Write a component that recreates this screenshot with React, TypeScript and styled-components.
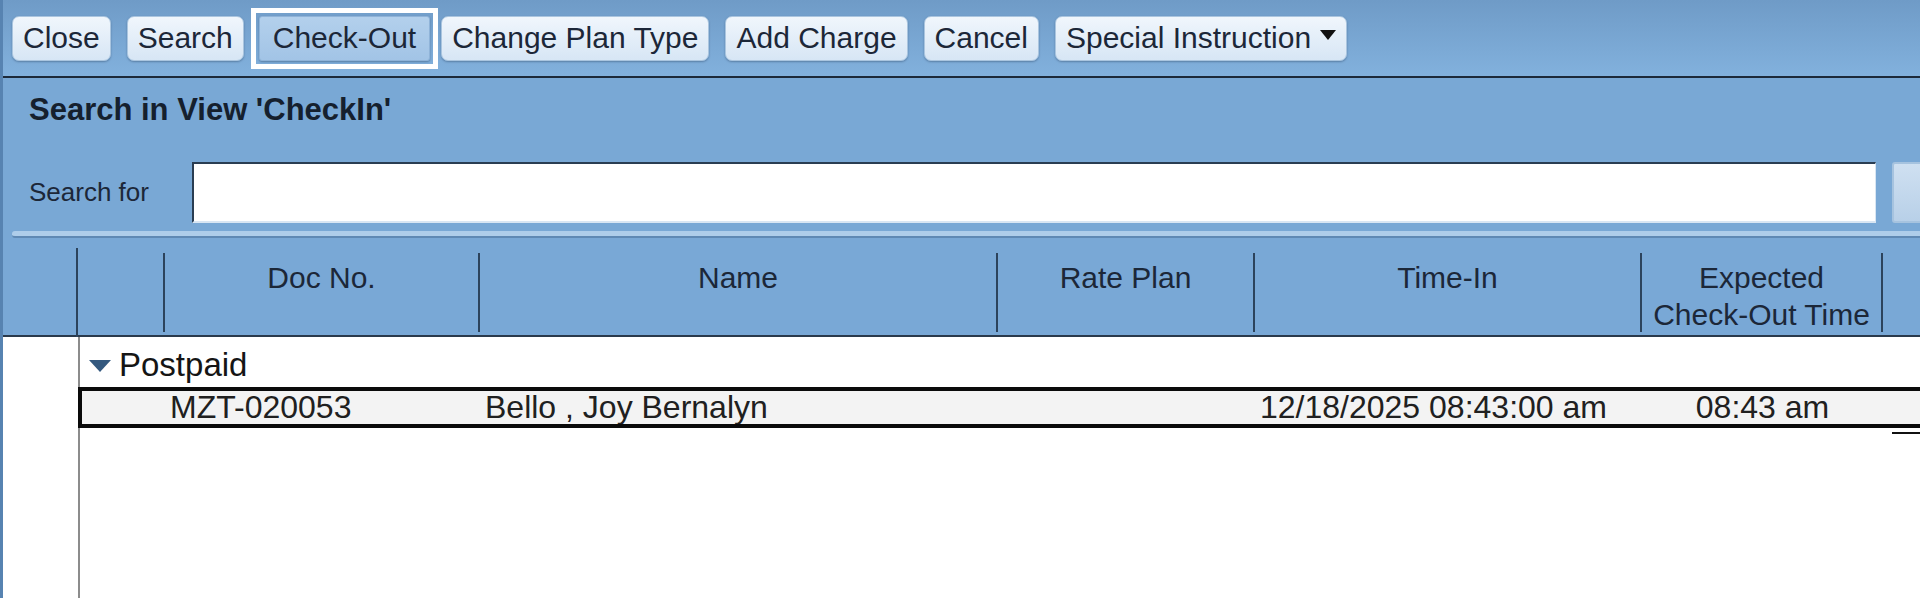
import styled, { createGlobalStyle } from "styled-components";

const GlobalStyle = createGlobalStyle`
  html, body {
    margin: 0;
    padding: 0;
    overflow: hidden;
    background: #ffffff;
  }
`

const SANS = `"Liberation Sans", Arial, sans-serif`

const Window = styled.div`
  width: 1920px;
  height: 598px;
  display: flex;
  flex-direction: column;
  overflow: hidden;
  box-sizing: border-box;
  border-left: 3px solid #5783b1;
  background: #ffffff;
  color: #1c2738;
  font-family: ${SANS};
`

const Toolbar = styled.div`
  height: 78px;
  flex-shrink: 0;
  display: flex;
  align-items: center;
  gap: 16px;
  padding-left: 9px;
  box-sizing: border-box;
  background: linear-gradient(#6f9bc7, #82b1dd);
  border-bottom: 2px solid #1d2a3a;
  box-shadow: 0 1px 0 #b2d1ee;
`

const ToolButton = styled.button<{ $active?: boolean }>`
  height: 45px;
  padding: 0 ${p => (p.$active ? "13px" : "10px")};
  display: flex;
  align-items: center;
  gap: 9px;
  font-family: ${SANS};
  font-size: 30px;
  color: #1c2738;
  border: 1px solid ${p => (p.$active ? "#8fb3d8" : "#aac5df")};
  border-radius: ${p => (p.$active ? "3px" : "7px")};
  background: ${p =>
    p.$active
      ? "linear-gradient(#b3d0ec, #a2c4e6)"
      : "linear-gradient(#f0f6fc, #d7e6f5)"};
  box-shadow: 0 1px 2px rgba(20, 40, 70, 0.35);
  cursor: pointer;
`

const ActiveFrame = styled.div`
  display: flex;
  padding: 3px;
  border: 5px solid #ffffff;
  margin: 0 -13px 0 -9px;
`

const Caret = styled.span`
  width: 0;
  height: 0;
  border-left: 8px solid transparent;
  border-right: 8px solid transparent;
  border-top: 10px solid #111;
  margin-top: -6px;
`

const SearchPanel = styled.div`
  flex-shrink: 0;
  background: #79a8d5;
  padding: 16px 0 8px 26px;
`

const Title = styled.div`
  font-weight: bold;
  font-size: 31px;
  line-height: 32px;
  color: #15202e;
`

const SearchRow = styled.div`
  display: flex;
  align-items: center;
  margin-top: 36px;
`

const Label = styled.div`
  width: 163px;
  flex-shrink: 0;
  font-size: 26px;
  color: #1c2738;
`

const SearchInput = styled.input`
  width: 1684px;
  height: 61px;
  flex-shrink: 0;
  box-sizing: border-box;
  border: none;
  border-top: 2px solid #2a3d52;
  border-left: 2px solid #2a3d52;
  border-bottom: 2px solid #d9e6f3;
  border-right: 1px solid #d9e6f3;
  background: #ffffff;
  outline: none;
`

const GoButton = styled.div`
  width: 40px;
  height: 61px;
  flex-shrink: 0;
  margin-left: 16px;
  box-sizing: border-box;
  border: 2px solid #a6c3df;
  border-radius: 3px;
  background: linear-gradient(#cfe0f1, #b8d0e8);
`

const SplitterBar = styled.div`
  flex-shrink: 0;
  padding-left: 9px;
  background: #79a8d5;
`

const Splitter = styled.div`
  height: 5px;
  background: #aecdea;
  border-radius: 3px 0 0 3px;
  border-bottom: 2px solid #5f89b4;
`

const COLS = "74px 87px 315px 518px 257px 387px 241px 1fr"

const HeaderRow = styled.div`
  height: 99px;
  flex-shrink: 0;
  box-sizing: border-box;
  display: grid;
  grid-template-columns: ${COLS};
  background: #79a8d6;
  border-bottom: 2px solid #2a3a4c;
`

const HeaderCell = styled.div<{ $sep?: boolean }>`
  position: relative;
  padding-top: 21px;
  text-align: center;
  font-size: 30px;
  line-height: 37px;
  color: #1c2738;
  white-space: nowrap;

  &::after {
    content: "";
    display: ${p => (p.$sep ? "block" : "none")};
    position: absolute;
    right: -1px;
    top: 15px;
    bottom: 3px;
    width: 2px;
    background: #2c435c;
  }
`

const GutterHead = styled.div`
  position: relative;

  &::after {
    content: "";
    position: absolute;
    right: -1px;
    top: 10px;
    bottom: -2px;
    width: 2px;
    background: #2c435c;
  }
`

const Body = styled.div`
  flex: 1;
  display: flex;
`

const Gutter = styled.div`
  width: 75px;
  flex-shrink: 0;
  border-right: 2px solid #8c8c8c;
  background: #ffffff;
`

const Rows = styled.div`
  flex: 1;
  display: flex;
  flex-direction: column;
  min-width: 0;
`

const GroupRow = styled.div`
  height: 50px;
  display: flex;
  align-items: center;
  padding-left: 9px;
  padding-top: 6px;
  box-sizing: border-box;
  gap: 8px;
  font-size: 33px;
  color: #151515;
`

const GroupToggle = styled.span`
  width: 0;
  height: 0;
  border-left: 11px solid transparent;
  border-right: 11px solid transparent;
  border-top: 12px solid #34597f;
  margin-top: 2px;
`

const DataRow = styled.div`
  height: 41px;
  box-sizing: border-box;
  display: grid;
  grid-template-columns: 83px 315px 518px 257px 387px 241px 1fr;
  align-items: center;
  margin-left: -2px;
  margin-right: -20px;
  border: 4px solid #0a0a0a;
  background: #f3f3f3;
  font-size: 32px;
  line-height: 33px;
  color: #202020;
`

const Cell = styled.div<{ $center?: boolean }>`
  padding-left: ${p => (p.$center ? "0" : "5px")};
  text-align: ${p => (p.$center ? "center" : "left")};
  white-space: nowrap;
  overflow: hidden;
`

const RowTail = styled.div`
  align-self: flex-end;
  width: 28px;
  height: 2px;
  margin-top: 4px;
  background: #111;
`

const buttons = ["Close", "Search", "Check-Out", "Change Plan Type", "Add Charge", "Cancel"]

const columns = ["Doc No.", "Name", "Rate Plan", "Time-In", "Expected\nCheck-Out Time"]

const App = () => {
  return (
    <>
      <GlobalStyle />
      <Window>
        <Toolbar>
          {buttons.map(b =>
            b === "Check-Out" ? (
              <ActiveFrame key={b}>
                <ToolButton $active>{b}</ToolButton>
              </ActiveFrame>
            ) : (
              <ToolButton key={b}>{b}</ToolButton>
            )
          )}
          <ToolButton>
            Special Instruction
            <Caret />
          </ToolButton>
        </Toolbar>

        <SearchPanel>
          <Title>Search in View 'CheckIn'</Title>
          <SearchRow>
            <Label>Search for</Label>
            <SearchInput />
            <GoButton />
          </SearchRow>
        </SearchPanel>

        <SplitterBar>
          <Splitter />
        </SplitterBar>

        <HeaderRow>
          <GutterHead />
          <HeaderCell $sep />
          {columns.map(c => (
            <HeaderCell key={c} $sep>
              {c.split("\n").map(line => (
                <div key={line}>{line}</div>
              ))}
            </HeaderCell>
          ))}
          <HeaderCell />
        </HeaderRow>

        <Body>
          <Gutter />
          <Rows>
            <GroupRow>
              <GroupToggle />
              Postpaid
            </GroupRow>
            <DataRow>
              <Cell />
              <Cell>MZT-020053</Cell>
              <Cell>Bello , Joy Bernalyn</Cell>
              <Cell />
              <Cell>12/18/2025 08:43:00 am</Cell>
              <Cell $center>08:43 am</Cell>
              <Cell />
            </DataRow>
            <RowTail />
          </Rows>
        </Body>
      </Window>
    </>
  );
}

export default App;
